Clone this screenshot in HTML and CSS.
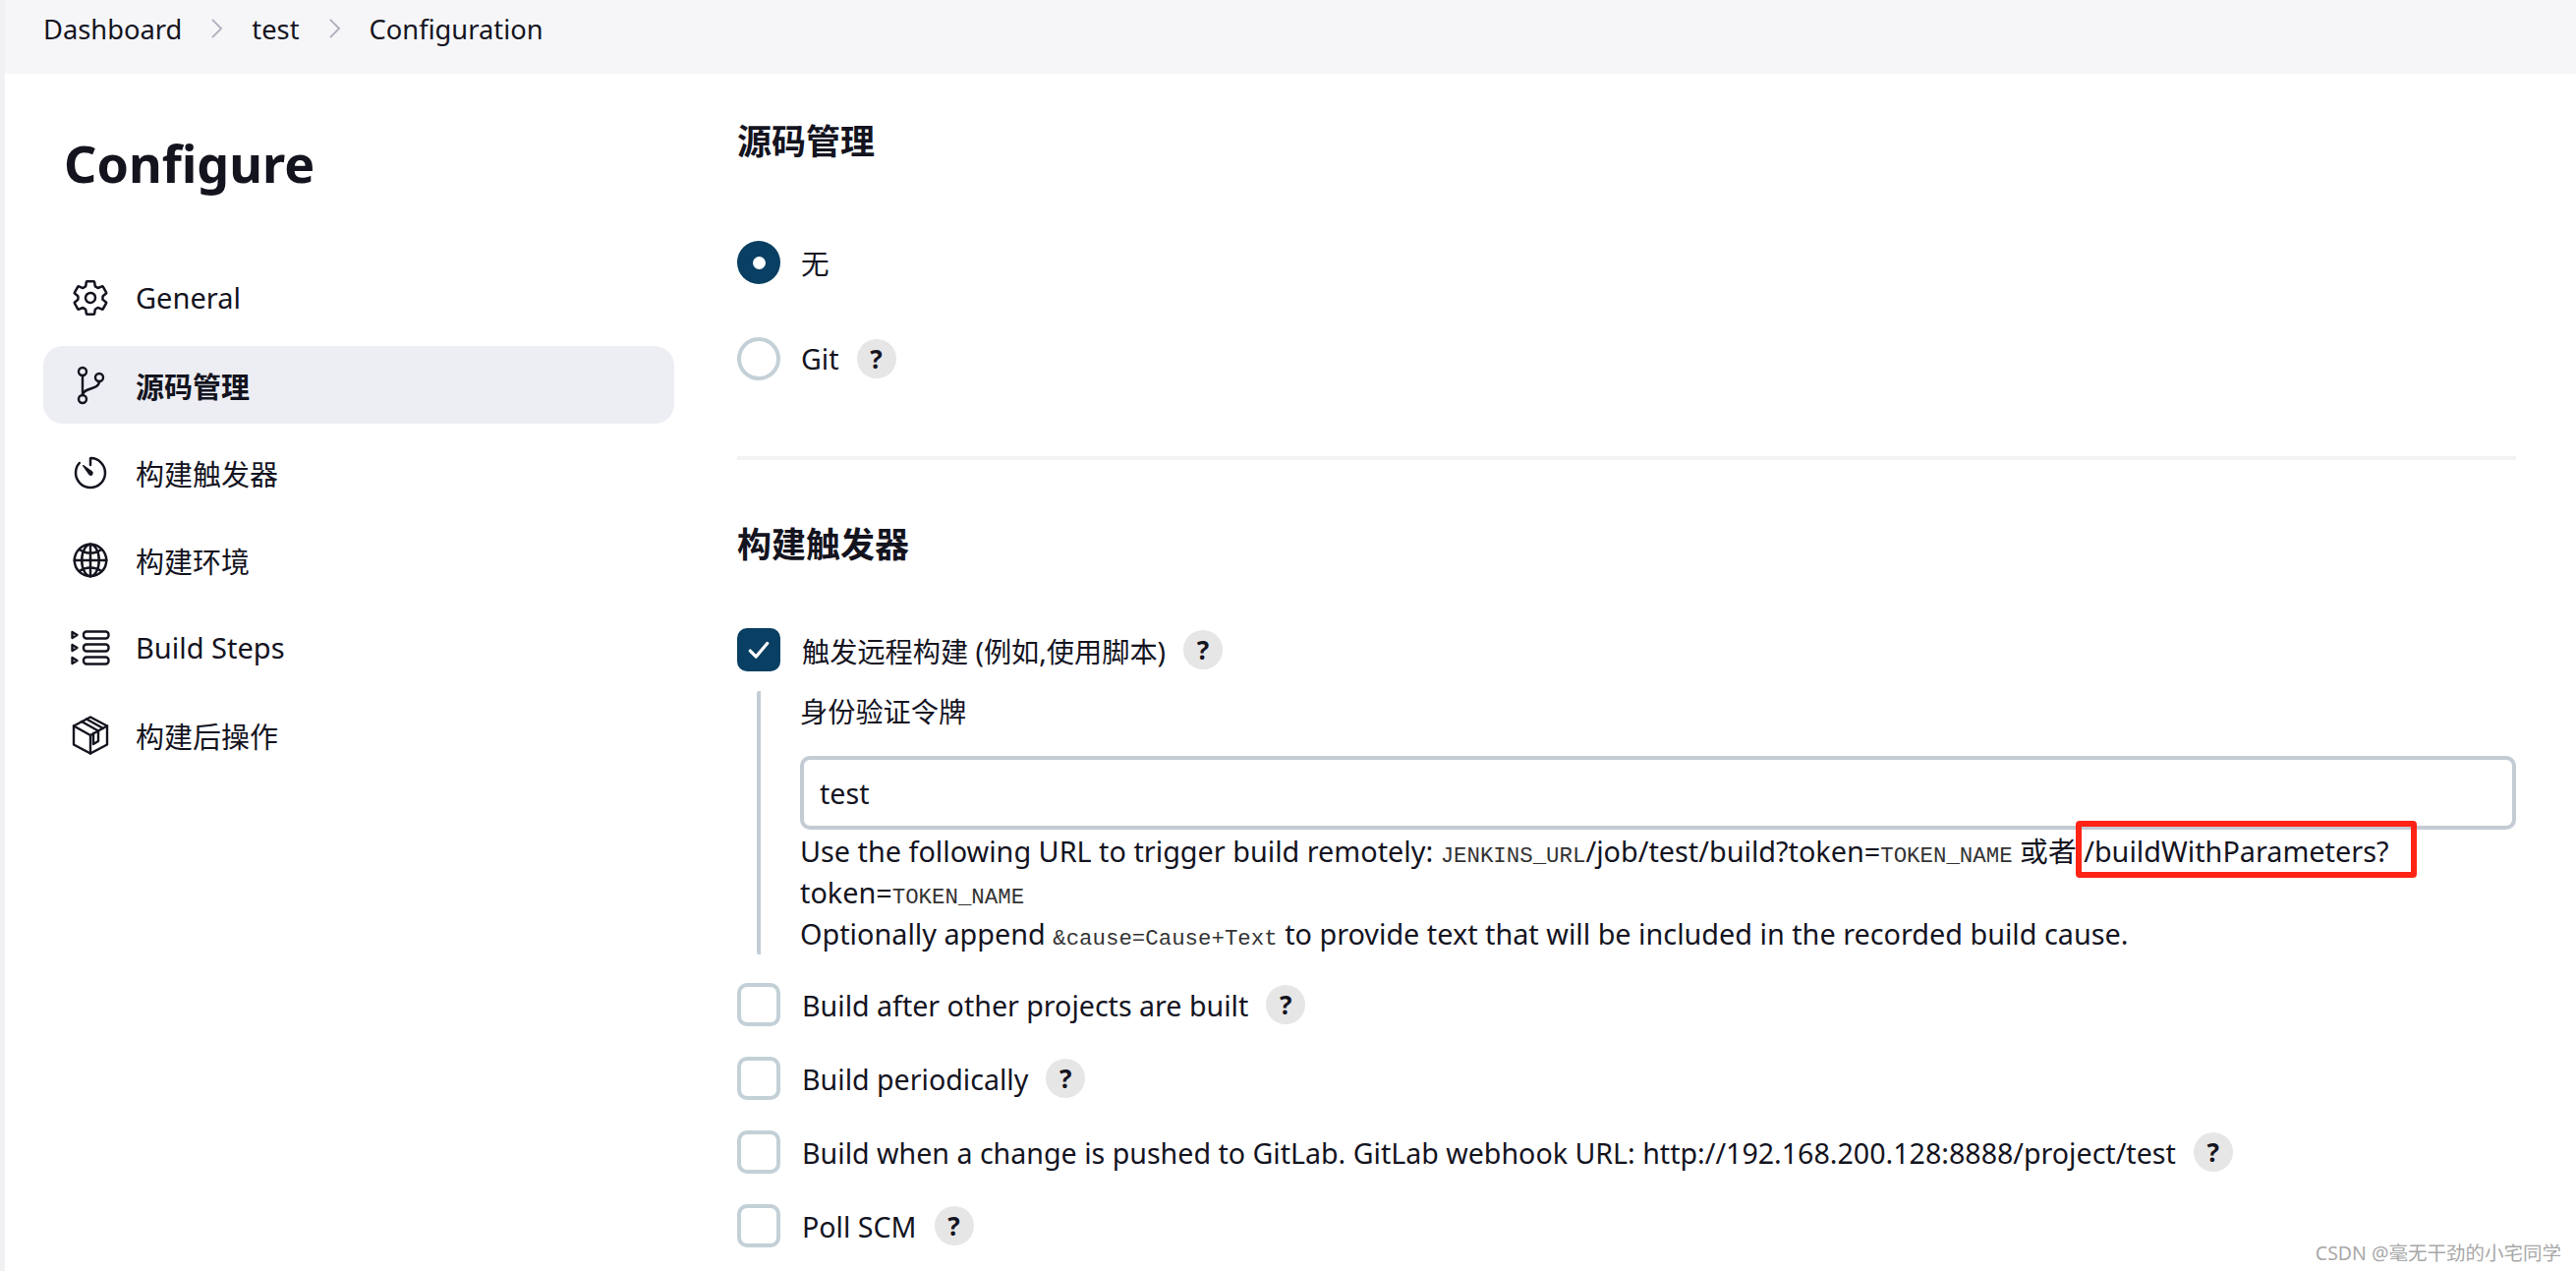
FILE: index.html
```html
<!DOCTYPE html>
<html lang="zh-CN">

<head>
  <meta charset="UTF-8" />
  <meta name="viewport" content="width=device-width, initial-scale=1.0" />
  <title>Configuration</title>
  <link rel="stylesheet" href="styles.css">
</head>

<body>
  <div class="app">
    <nav class="crumbs">
      <span>Dashboard</span>
      <svg class="crumb-sep" viewBox="0 0 14 24"><path d="M2 2l10 10L2 22" /></svg>
      <span>test</span>
      <svg class="crumb-sep" viewBox="0 0 14 24"><path d="M2 2l10 10L2 22" /></svg>
      <span>Configuration</span>
    </nav>

    <div class="layout">
      <aside class="sidebar">
        <h1>Configure</h1>
        <ul class="side-nav">
          <li class="side-item">
            <svg class="side-icon" viewBox="0 0 512 512"><path d="M262.29 192.31a64 64 0 1057.4 57.4 64.13 64.13 0 00-57.4-57.4zM416.39 256a154.34 154.34 0 01-1.53 20.79l45.21 35.46a10.81 10.81 0 012.45 13.75l-42.77 74a10.81 10.81 0 01-13.14 4.59l-44.9-18.08a16.11 16.11 0 00-15.17 1.75A164.48 164.48 0 01325 400.8a15.94 15.94 0 00-8.82 12.14l-6.73 47.89a11.08 11.08 0 01-10.68 9.17h-85.54a11.11 11.11 0 01-10.69-8.87l-6.72-47.82a16.07 16.07 0 00-9-12.22 155.3 155.3 0 01-21.46-12.57 16 16 0 00-15.11-1.71l-44.89 18.07a10.81 10.81 0 01-13.14-4.58l-42.77-74a10.8 10.8 0 012.45-13.75l38.21-30a16.05 16.05 0 006-14.08c-.36-4.17-.58-8.33-.58-12.5s.21-8.27.58-12.35a16 16 0 00-6.07-13.94l-38.19-30A10.81 10.81 0 0149.48 186l42.77-74a10.81 10.81 0 0113.14-4.59l44.9 18.08a16.11 16.11 0 0015.17-1.75A164.48 164.48 0 01187 111.2a15.94 15.94 0 008.82-12.14l6.73-47.89A11.08 11.08 0 01213.23 42h85.54a11.11 11.11 0 0110.69 8.87l6.72 47.82a16.07 16.07 0 009 12.22 155.3 155.3 0 0121.46 12.57 16 16 0 0015.11 1.71l44.89-18.07a10.81 10.81 0 0113.14 4.58l42.77 74a10.8 10.8 0 01-2.45 13.75l-38.21 30a16.05 16.05 0 00-6.05 14.08c.33 4.14.55 8.3.55 12.47z" /></svg>
            <span>General</span>
          </li>
          <li class="side-item active">
            <svg class="side-icon" viewBox="0 0 40 40"><circle cx="12" cy="6" r="4" /><circle cx="12" cy="34" r="4" /><circle cx="29" cy="12" r="4" /><path d="M12 10v20M29 16c0 9-17 6-17 14" /></svg>
            <span>源码管理</span>
          </li>
          <li class="side-item">
            <svg class="side-icon" viewBox="0 0 512 512"><path d="M112.91 128A191.85 191.85 0 0064 254c-1.18 106.35 85.65 193.8 192 194 106.2.2 192-85.83 192-192 0-104.54-83.55-189.61-187.5-192a4.36 4.36 0 00-4.5 4.37V152" /><path class="solid" d="M233.38 278.63l-79-113a8.13 8.13 0 0111.32-11.32l113 79a32.5 32.5 0 01-37 53.34 33.21 33.21 0 01-8.32-8.02z" /></svg>
            <span>构建触发器</span>
          </li>
          <li class="side-item">
            <svg class="side-icon" viewBox="0 0 512 512"><path d="M256 48C141.13 48 48 141.13 48 256s93.13 208 208 208 208-93.13 208-208S370.87 48 256 48z" /><path d="M256 48c-58.07 0-112.67 93.13-112.67 208S197.93 464 256 464s112.67-93.13 112.67-208S314.07 48 256 48z" /><path d="M117.33 117.33c38.24 27.15 86.38 43.34 138.67 43.34s100.43-16.19 138.67-43.34M394.67 394.67c-38.24-27.15-86.38-43.34-138.67-43.34s-100.43 16.19-138.67 43.34" /><path d="M256 48v416M464 256H48" /></svg>
            <span>构建环境</span>
          </li>
          <li class="side-item">
            <svg class="side-icon" viewBox="0 0 40 40"><path d="M1.5 4l5 3-5 3zM1.5 17l5 3-5 3zM1.5 30l5 3-5 3z" /><rect x="13" y="3.5" width="25.5" height="7" rx="3" /><rect x="13" y="16.5" width="25.5" height="7" rx="3" /><rect x="13" y="29.5" width="25.5" height="7" rx="3" /></svg>
            <span>Build Steps</span>
          </li>
          <li class="side-item">
            <svg class="side-icon" viewBox="0 0 40 40"><path d="M20 1.5L37 10.5V29.5L20 38.500L3 29.5V10.5z" /><path d="M3 10.500L20 20V38.500M20 20L37 10.500M11 6L28 15.500V26L23 29V18M16 3.500L33 13" /></svg>
            <span>构建后操作</span>
          </li>
        </ul>
      </aside>

      <main class="content">
        <h2 class="section-title">源码管理</h2>
        <div class="radio-row first-row">
          <span class="radio checked"></span>
          <span class="row-label">无</span>
        </div>
        <div class="radio-row git-row">
          <span class="radio"></span>
          <span class="row-label">Git</span>
          <span class="help">?</span>
        </div>

        <hr class="divider">

        <h2 class="section-title">构建触发器</h2>
        <div class="check-row first-row">
          <span class="check checked"><svg viewBox="0 0 24 24"><path d="M4 13l5.500 5.500L20 6" /></svg></span>
          <span class="row-label cjk">触发远程构建 (例如,使用脚本)</span>
          <span class="help">?</span>
        </div>

        <div class="nested">
          <div class="field-label cjk">身份验证令牌</div>
          <input class="text-input" type="text" value="test">
          <div class="field-help">
            Use the following URL to trigger build remotely: <code>JENKINS_URL</code>/job/test/build?token=<code>TOKEN_NAME</code> 或者 /buildWithParameters?<br>
            token=<code>TOKEN_NAME</code><br>
            Optionally append <code>&amp;cause=Cause+Text</code> to provide text that will be included in the recorded build cause.
          </div>
        </div>

        <div class="check-list">
          <div class="check-row">
            <span class="check"></span>
            <span class="row-label">Build after other projects are built</span>
            <span class="help">?</span>
          </div>
          <div class="check-row">
            <span class="check"></span>
            <span class="row-label">Build periodically</span>
            <span class="help">?</span>
          </div>
          <div class="check-row">
            <span class="check"></span>
            <span class="row-label">Build when a change is pushed to GitLab. GitLab webhook URL: http://192.168.200.128:8888/project/test</span>
            <span class="help">?</span>
          </div>
          <div class="check-row">
            <span class="check"></span>
            <span class="row-label">Poll SCM</span>
            <span class="help">?</span>
          </div>
        </div>
      </main>
    </div>

    <div class="red-box"></div>
    <div class="watermark">CSDN @毫无干劲的小宅同学</div>
  </div>
</body>

</html>
```

FILE: styles.css
```css
* {
  box-sizing: border-box;
}

html,
body {
  margin: 0;
  height: 100%;
}

body {
  font-family: "Noto Sans", "Noto Sans CJK SC", sans-serif;
  font-size: 28.6px;
  color: #14141f;
  background: #fff;
}

.app {
  position: relative;
  height: 100vh;
  overflow: hidden;
  border-left: 5px solid #f1f1f3;
}

/* top bar */
.crumbs {
  display: flex;
  align-items: center;
  height: 75px;
  padding: 0 0 17px 39px;
  background: #f6f6f8;
  font-size: 27.3px;
}

.crumb-sep {
  width: 13px;
  height: 22px;
  margin: 0 29px;
  fill: none;
  stroke: #aeaebd;
  stroke-width: 2;
}

.layout {
  display: flex;
}

/* sidebar */
.sidebar {
  width: 681px;
  padding-left: 39px;
  flex-shrink: 0;
}

.sidebar h1 {
  margin: 0 0 60px 21px;
  padding-top: 53px;
  font-size: 52px;
  line-height: 75px;
  font-weight: 700;
}

.side-nav {
  display: flex;
  flex-direction: column;
  gap: 10px;
  margin: 0;
  padding: 0;
  list-style: none;
}

.side-item {
  display: flex;
  align-items: center;
  gap: 26px;
  width: 642px;
  height: 79px;
  padding-left: 28px;
  border-radius: 20px;
  font-size: 29px;
}

.side-item.active {
  background: #edeef3;
  font-weight: 700;
}

.side-icon {
  width: 40px;
  height: 40px;
  flex-shrink: 0;
  fill: none;
  stroke: #14141f;
  stroke-width: 2.4;
  stroke-linecap: round;
  stroke-linejoin: round;
}

.side-icon[viewBox="0 0 512 512"] {
  stroke-width: 32;
}

.side-icon .solid {
  fill: #14141f;
  stroke: none;
}

/* main column */
.content {
  width: 1810px;
  padding-top: 44px;
  margin-left: 64px;
}

.section-title {
  margin: 0;
  font-size: 35px;
  line-height: 50px;
  font-weight: 700;
}

.radio-row,
.check-row {
  display: flex;
  align-items: center;
  height: 44px;
}

.first-row {
  margin-top: 60px;
}

.radio-row.first-row {
  margin-top: 76px;
}

.git-row {
  margin-top: 54px;
}

.radio {
  width: 44px;
  height: 44px;
  flex-shrink: 0;
  border: 4px solid #c3d0d7;
  border-radius: 50%;
  background: #fff;
}

.radio.checked {
  display: flex;
  align-items: center;
  justify-content: center;
  border: 0;
  background: #083f62;
}

.radio.checked::after {
  content: "";
  width: 13px;
  height: 13px;
  border-radius: 50%;
  background: #fff;
}

.radio-row .row-label {
  margin-left: 21px;
  margin-top: -2px;
}

.check {
  display: flex;
  align-items: center;
  justify-content: center;
  width: 44px;
  height: 44px;
  flex-shrink: 0;
  border: 4px solid #c3d0d7;
  border-radius: 10px;
  background: #fff;
}

.check.checked {
  border: 0;
  background: #083f62;
}

.check svg {
  width: 26px;
  height: 26px;
  fill: none;
  stroke: #fff;
  stroke-width: 3;
  stroke-linecap: round;
  stroke-linejoin: round;
}

.row-label {
  margin-left: 22px;
  white-space: nowrap;
}

.cjk {
  font-size: 28.2px;
}

.help {
  display: flex;
  align-items: center;
  justify-content: center;
  width: 40px;
  height: 40px;
  margin-left: 18px;
  flex-shrink: 0;
  border-radius: 50%;
  background: #e6e6e6;
  font-size: 26px;
  font-weight: 700;
}

.divider {
  height: 4px;
  margin: 77px 0 61px;
  border: 0;
  background: #f3f3f6;
}

/* token block under the first trigger */
.nested {
  margin: 20px 0 0 20px;
  padding-left: 40px;
  border-left: 4px solid #c3ccd4;
  border-radius: 2px;
}

.field-label {
  line-height: 42px;
}

.text-input {
  display: block;
  width: 100%;
  height: 75px;
  margin-top: 24px;
  padding: 0 16px;
  border: 4px solid #c3ccd4;
  border-radius: 10px;
  background: #fff;
  color: #14141f;
  font: inherit;
}

.field-help {
  margin-top: 1px;
  font-size: 28.8px;
  line-height: 42px;
  white-space: nowrap;
}

code {
  font-family: "Liberation Mono", "Noto Sans CJK SC", monospace;
  font-size: 22.4px;
  line-height: 1;
  color: #333;
}

.check-list {
  display: flex;
  flex-direction: column;
  gap: 31px;
  margin-top: 29px;
}

/* annotation drawn over the screenshot */
.red-box {
  position: absolute;
  left: 2107px;
  top: 835px;
  width: 347px;
  height: 58px;
  border: 6px solid #ff2416;
  border-radius: 4px;
}

.watermark {
  position: absolute;
  right: 15px;
  top: 1263px;
  font-size: 19.5px;
  line-height: 24px;
  color: #a8a8a8;
}
```
